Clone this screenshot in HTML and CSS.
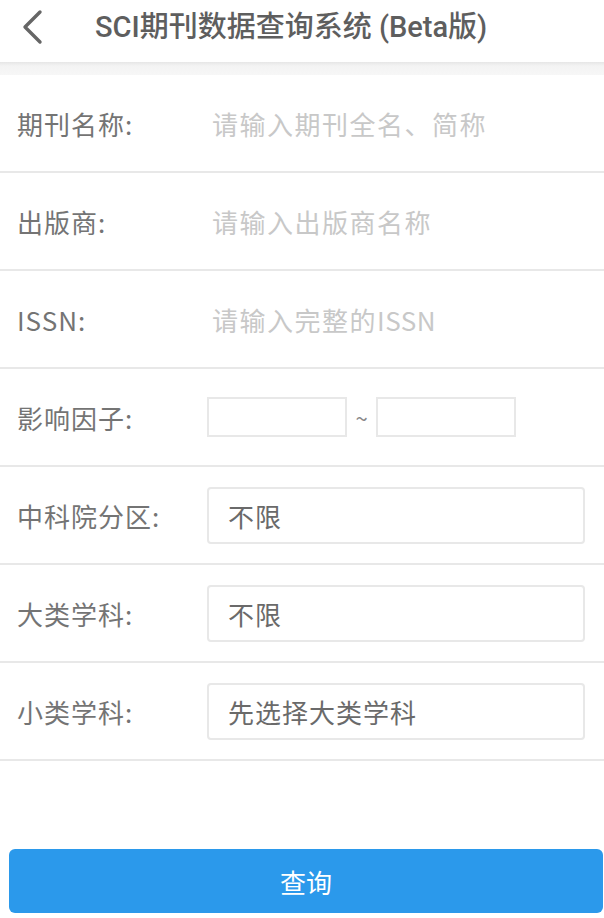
FILE: index.html
```html
<!DOCTYPE html>
<html lang="zh">
<head>
<meta charset="utf-8">
<title>SCI期刊数据查询系统 (Beta版)</title>
<link rel="stylesheet" href="styles.css">
</head>
<body>
<header class="topbar">
  <span class="back">
    <svg width="24" height="36" viewBox="0 0 24 36"><path d="M20 3 L5 18 L20 33" fill="none" stroke="#666" stroke-width="3.4" stroke-linecap="round" stroke-linejoin="round"/></svg>
  </span>
  <h1 class="title">SCI期刊数据查询系统 (Beta版)</h1>
</header>
<div class="band"></div>
<main class="form">
  <div class="row">
    <span class="label">期刊名称:</span>
    <span class="placeholder">请输入期刊全名、简称</span>
  </div>
  <div class="row">
    <span class="label">出版商:</span>
    <span class="placeholder">请输入出版商名称</span>
  </div>
  <div class="row">
    <span class="label">ISSN:</span>
    <span class="placeholder">请输入完整的<span class="latin">ISSN</span></span>
  </div>
  <div class="row">
    <span class="label">影响因子:</span>
    <div class="range">
      <span class="small-box"></span>
      <span class="tilde">~</span>
      <span class="small-box"></span>
    </div>
  </div>
  <div class="row">
    <span class="label">中科院分区:</span>
    <span class="select">不限</span>
  </div>
  <div class="row">
    <span class="label">大类学科:</span>
    <span class="select">不限</span>
  </div>
  <div class="row">
    <span class="label">小类学科:</span>
    <span class="select">先选择大类学科</span>
  </div>
</main>
<div class="actions">
  <button class="submit">查询</button>
</div>
</body>
</html>
```
FILE: styles.css
```css
* { box-sizing: border-box; }
html, body { margin: 0; padding: 0; background: #fff; }
body {
  width: 604px;
  font-family: Roboto, "Noto Sans CJK SC", sans-serif;
  color: #666;
}
.topbar {
  height: 62px;
  display: flex;
  align-items: center;
  padding-bottom: 8px;
  background: #fff;
}
.back {
  width: 95px;
  padding-left: 20px;
  display: flex;
  align-items: center;
}
.back svg { display: block; }
.title {
  margin: 0;
  font-size: 29px;
  font-weight: 500;
  color: #5e5e5e;
  line-height: 1;
}
.band {
  height: 13px;
  background: linear-gradient(#e6e6e6, #f3f3f3 30%, #f7f7f7);
}
.form { display: flex; flex-direction: column; }
.row {
  height: 98px;
  border-bottom: 2px solid #e8e8e8;
  display: flex;
  align-items: center;
  padding-left: 17px;
  font-family: "Noto Sans CJK SC", sans-serif;
  font-size: 26px;
  letter-spacing: 1px;
}
.label {
  width: 190px;
  color: #747474;
}
.placeholder {
  padding-left: 5px;
  color: #c8c8c8;
  letter-spacing: 1.5px;
}
.latin { letter-spacing: 0.5px; }
.range { display: flex; align-items: center; }
.small-box {
  width: 140px;
  height: 40px;
  border: 2px solid #e8e8e8;
}
.tilde {
  width: 29px;
  text-align: center;
  font-size: 22px;
  color: #888;
  letter-spacing: 0;
}
.select {
  width: 378px;
  height: 57px;
  border: 2px solid #e8e8e8;
  border-radius: 4px;
  display: flex;
  align-items: center;
  padding-left: 19px;
  color: #6a6a6a;
}
.actions {
  padding: 88px 1px 4px 9px;
}
.submit {
  width: 594px;
  height: 64px;
  border: 0;
  border-radius: 6px;
  background: #2b99eb;
  color: #fff;
  font-family: "Noto Sans CJK SC", sans-serif;
  font-size: 26px;
  display: block;
}
```
